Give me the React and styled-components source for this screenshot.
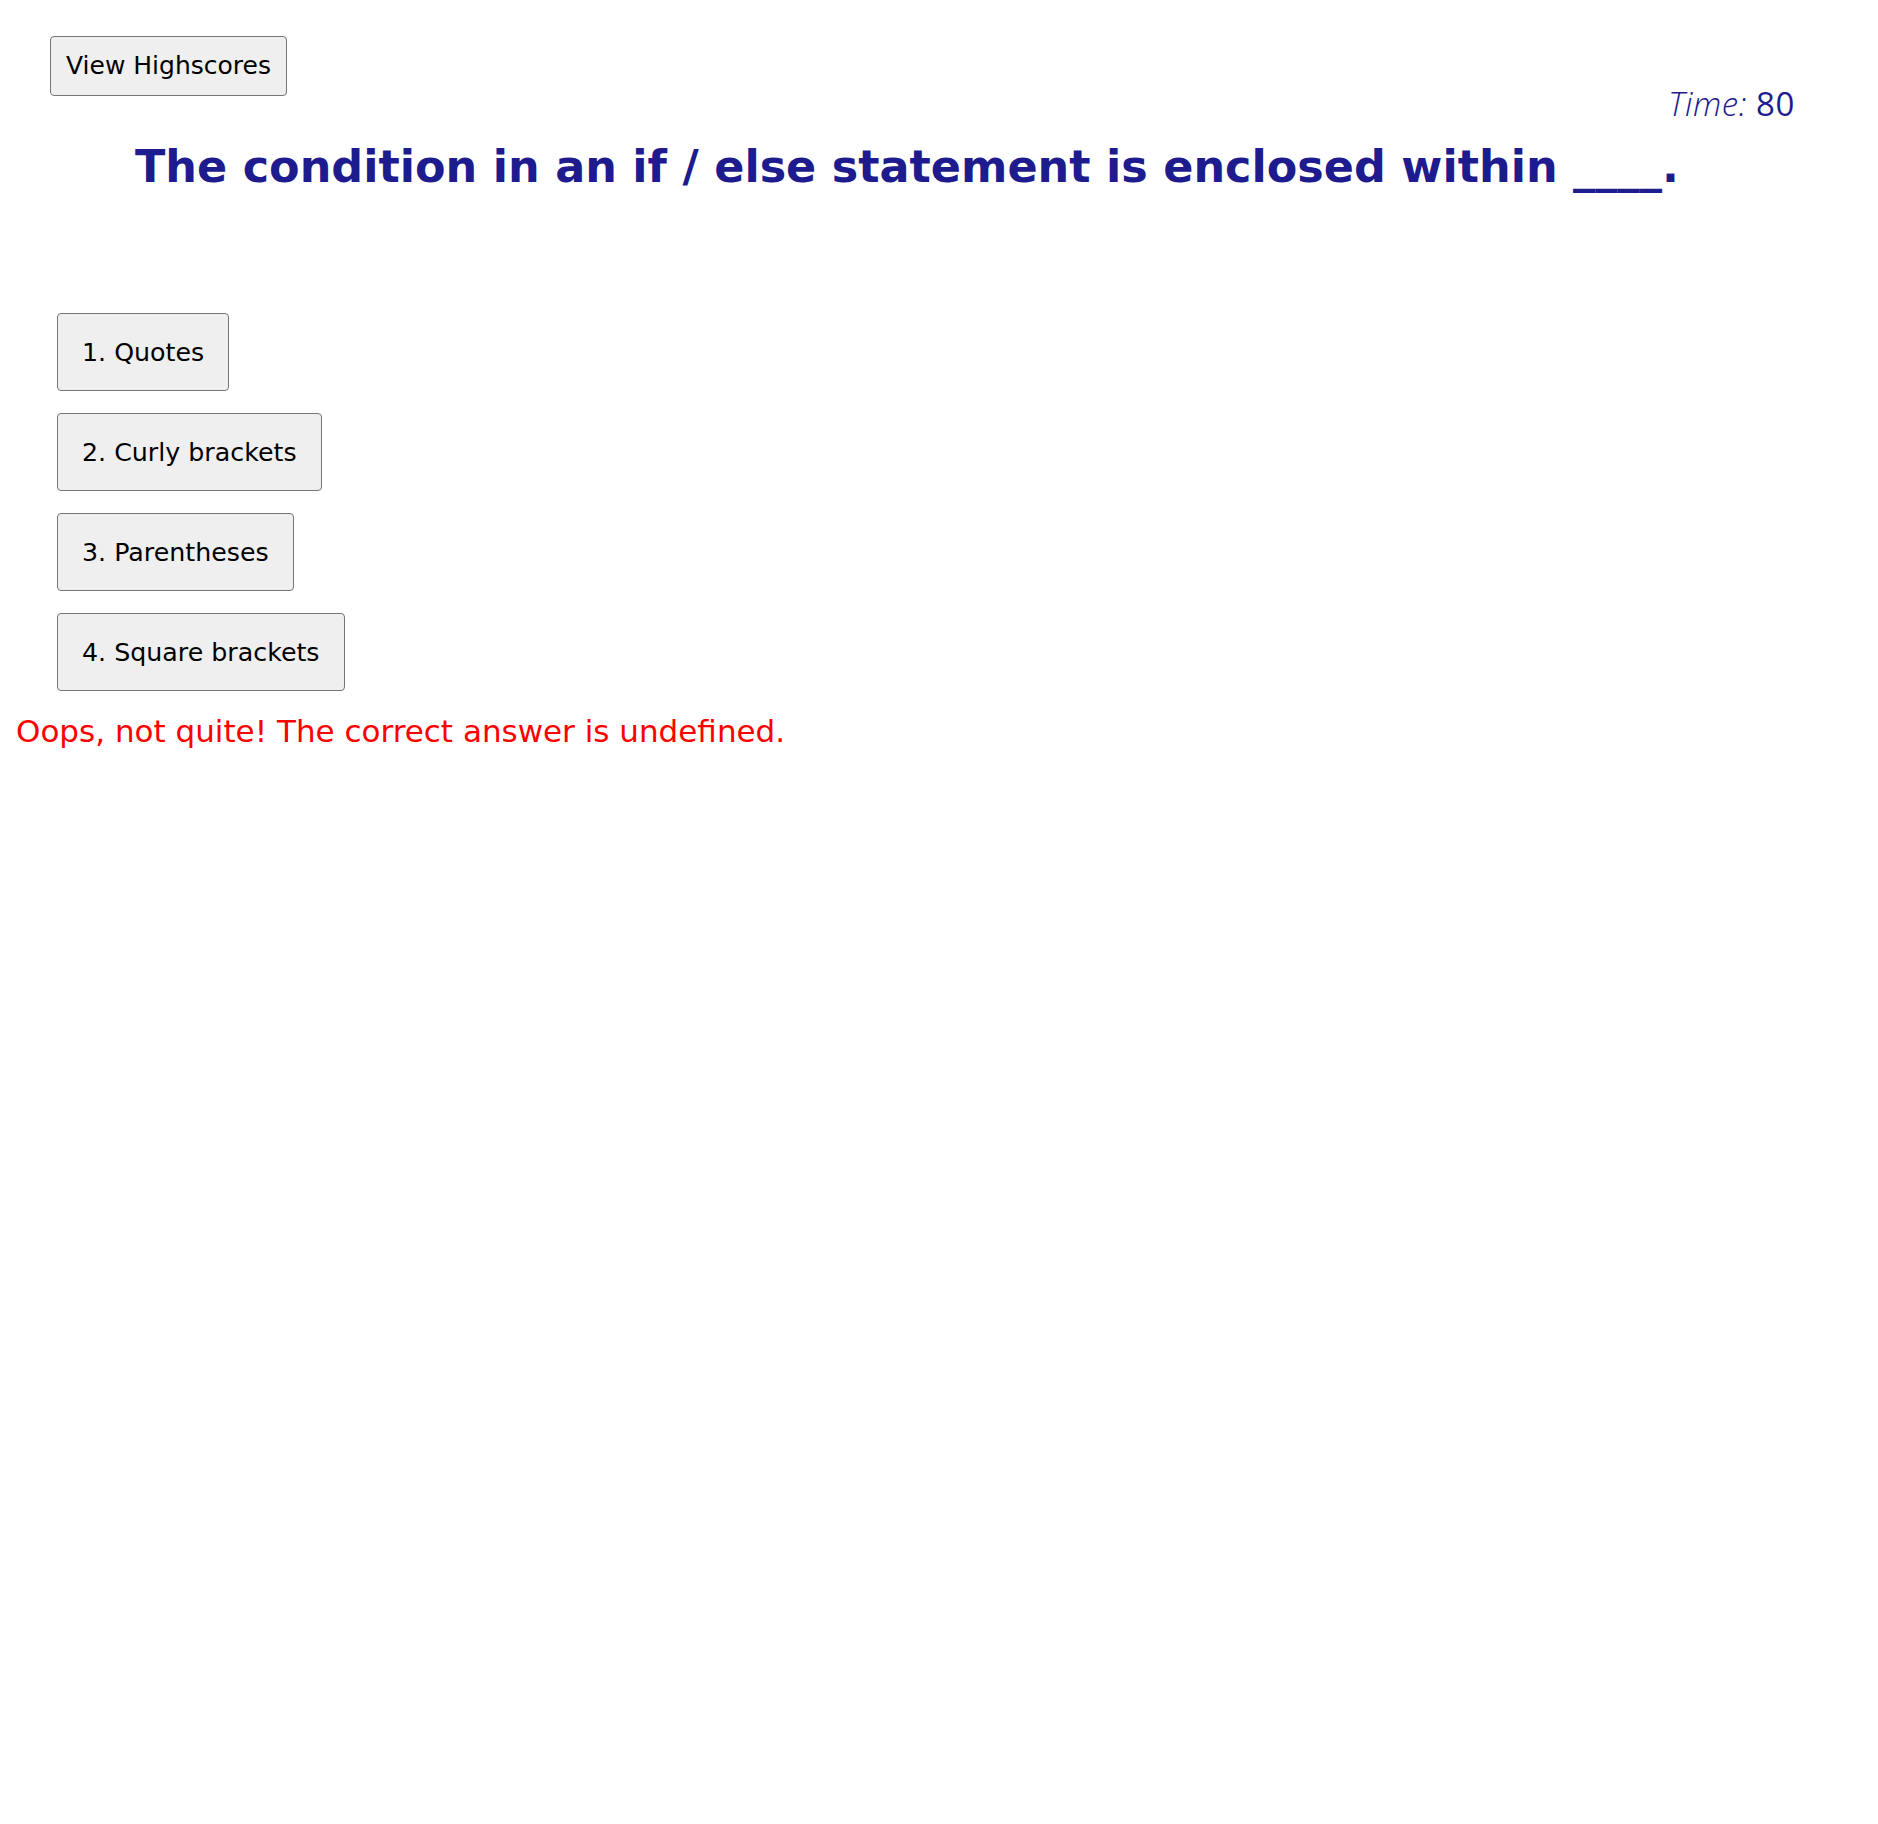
import React from 'react'
import styled, { createGlobalStyle } from 'styled-components'

const GlobalStyle = createGlobalStyle`
    body {
        margin: 0;
        background: #ffffff;
        font-family: "DejaVu Sans", "Liberation Sans", sans-serif;
    }
`

const Page = styled.div`
    display: flex;
    flex-direction: column;
`

const Header = styled.header`
    display: flex;
    justify-content: space-between;
    align-items: flex-start;
    padding: 36px 83px 0 50px;
`

const Button = styled.button`
    font-family: "DejaVu Sans", "Liberation Sans", sans-serif;
    font-size: ${p => p.$size || 25.3}px;
    line-height: 30px;
    color: #000000;
    background-color: #efefef;
    border: 1px solid #767676;
    border-radius: 4px;
    padding: ${p => p.$pad || '24px 24px 22px'};
    cursor: pointer;
`

const Timer = styled.div`
    margin-top: 45px;
    font-family: "Open Sans", "DejaVu Sans", sans-serif;
    font-size: 33px;
    letter-spacing: 0.6px;
    color: #1d1b8d;
`

const TimeLabel = styled.span`
    font-style: italic;
    font-weight: 300;
`

const TimeValue = styled.span`
    font-weight: 500;
`

const Question = styled.h1`
    margin: 15px 64px 0 0;
    font-size: 44.5px;
    font-weight: bold;
    color: #1d1b8d;
    text-align: center;
`

const Answers = styled.div`
    display: flex;
    flex-direction: column;
    align-items: flex-start;
    gap: 22px;
    margin-top: 121px;
    padding-left: 57px;
`

const Feedback = styled.p`
    margin: 22px 0 0;
    padding-left: 16px;
    font-size: 31px;
    color: #ff0000;
`

const answers = ['1. Quotes', '2. Curly brackets', '3. Parentheses', '4. Square brackets']

export default function App() {
    return (
        <Page>
            <GlobalStyle />
            <Header>
                <Button $size={25} $pad="14px 15px">View Highscores</Button>
                <Timer>
                    <TimeLabel>Time:</TimeLabel> <TimeValue>80</TimeValue>
                </Timer>
            </Header>
            <Question>The condition in an if / else statement is enclosed within ____.</Question>
            <Answers>
                {answers.map(a => (
                    <Button key={a}>{a}</Button>
                ))}
            </Answers>
            <Feedback>Oops, not quite! The correct answer is undefined.</Feedback>
        </Page>
    )
}
